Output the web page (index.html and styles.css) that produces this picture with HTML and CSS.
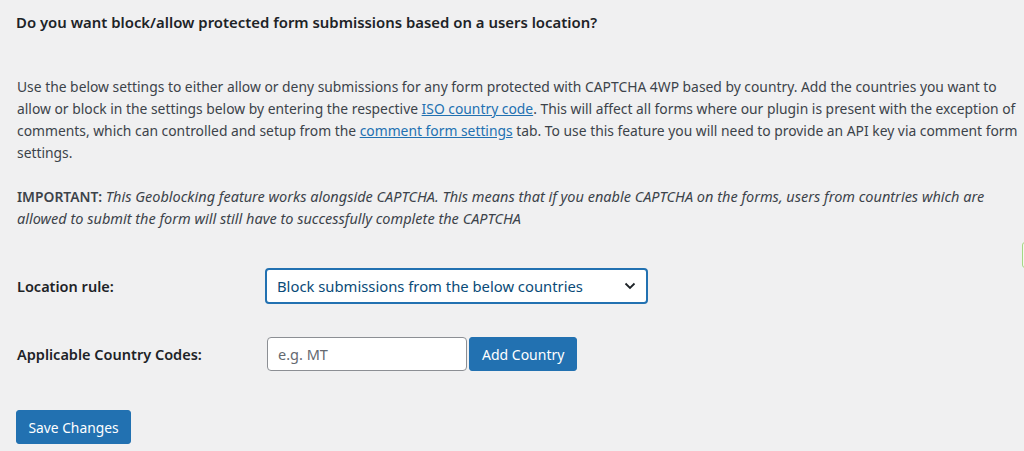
FILE: index.html
```html
<!DOCTYPE html>
<html lang="en">
<head>
    <meta charset="UTF-8">
    <meta name="viewport" content="width=device-width, initial-scale=1.0">
    <title>Geoblocking settings</title>
    <link rel="stylesheet" href="styles.css">
</head>
<body>
    <div class="wrap">
        <h2 class="section-title">Do you want block/allow protected form submissions based on a users location?</h2>

        <p class="description">Use the below settings to either allow or deny submissions for any form protected with CAPTCHA 4WP based by country. Add the countries you want to allow or block in the settings below by entering the respective <a href="#">ISO country code</a>. This will affect all forms where our plugin is present with the exception of comments, which can controlled and setup from the <a href="#">comment form settings</a> tab. To use this feature you will need to provide an API key via comment form settings.</p>

        <p class="description"><strong>IMPORTANT:</strong> <em>This Geoblocking feature works alongside CAPTCHA. This means that if you enable CAPTCHA on the forms, users from countries which are allowed to submit the form will still have to successfully complete the CAPTCHA</em></p>

        <div class="form-row rule-row">
            <label class="row-label">Location rule:</label>
            <div class="select-box">
                <span>Block submissions from the below countries</span>
                <svg width="12" height="8" viewBox="0 0 12 8"><path d="M1.5 1.5 L6 6 L10.5 1.5" fill="none" stroke="#1d2327" stroke-width="1.8"/></svg>
            </div>
        </div>

        <div class="form-row codes-row">
            <label class="row-label">Applicable Country Codes:</label>
            <div class="inline-field">
                <input class="text-input" type="text" placeholder="e.g. MT">
                <button class="button-primary">Add Country</button>
            </div>
        </div>

        <button class="button-primary save-button">Save Changes</button>
    </div>

    <div class="side-tab"></div>
</body>
</html>
```

FILE: styles.css
```css
body {
    margin: 0;
    background: #f0f0f1;
    font-family: 'Noto Sans', 'Open Sans', sans-serif;
    color: #3c434a;
    font-size: 13.85px;
    overflow: hidden;
}
.wrap {
    padding: 12px 0 0 16px;
    width: 1004px;
}
.section-title {
    margin: 0;
    font-size: 14.9px;
    font-weight: 600;
    color: #1d2327;
    line-height: 20px;
}
.description {
    margin: 44px 0 0 1px;
    line-height: 22px;
}
.description + .description {
    margin-top: 22px;
}
.description a {
    color: #2271b1;
}
.description strong {
    font-weight: 600;
}
.description em {
    font-size: 1.047em;
    line-height: 20px;
}
.form-row {
    display: flex;
    align-items: center;
}
.rule-row {
    margin-top: 38px;
}
.codes-row {
    margin-top: 33px;
}
.row-label {
    width: 248px;
    padding-left: 1px;
    font-size: 14.5px;
    font-weight: 600;
    color: #1d2327;
}
.select-box {
    width: 359px;
    height: 32px;
    border: 2px solid #2271b1;
    border-radius: 4px;
    background: #fff;
    display: flex;
    align-items: center;
    justify-content: space-between;
    padding: 0 10px;
    font-size: 14.8px;
    color: #0a4b78;
}
.inline-field {
    display: flex;
    gap: 2px;
    margin-left: 2px;
}
.text-input {
    width: 200px;
    height: 34px;
    box-sizing: border-box;
    border: 1px solid #8c8f94;
    border-radius: 4px;
    padding: 0 10px;
    font-family: inherit;
    font-size: 14.5px;
    background: #fff;
}
.text-input::placeholder {
    color: #646970;
}
.button-primary {
    background: #2271b1;
    border: 1px solid #2271b1;
    border-radius: 3px;
    color: #fff;
    font-family: inherit;
    font-size: 14px;
    height: 34px;
    padding: 0 12px;
    cursor: pointer;
}
.save-button {
    margin-top: 39px;
    width: 115px;
    padding: 0;
    font-size: 13.8px;
}
.side-tab {
    position: absolute;
    right: -6px;
    top: 242px;
    width: 6px;
    height: 24px;
    border: 1px solid #a6d785;
    border-radius: 3px;
    background: #f4faf0;
}
```
